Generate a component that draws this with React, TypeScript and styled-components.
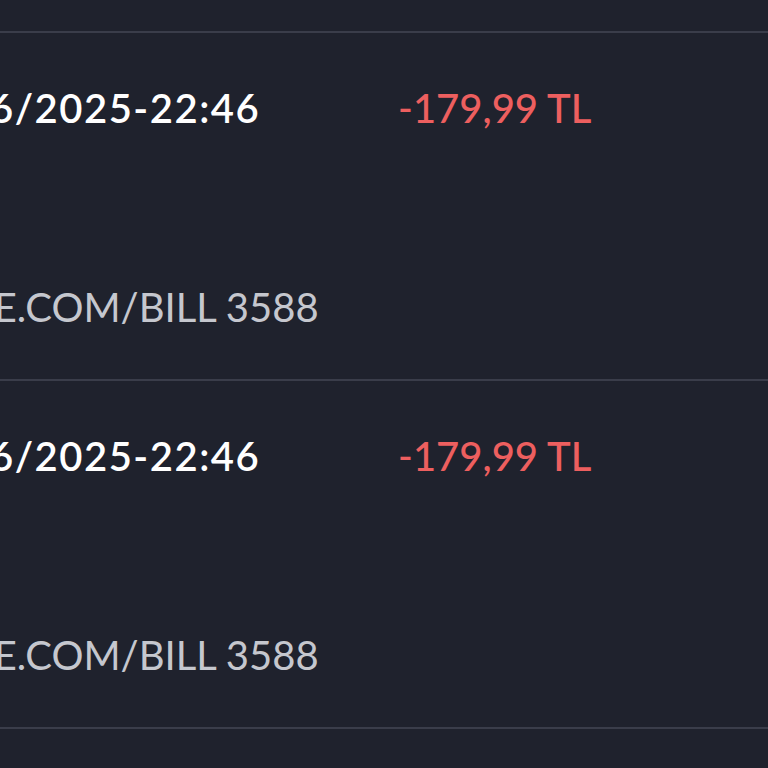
import React from "react";
import styled, { createGlobalStyle } from "styled-components";

interface Transaction {
  date: string;
  amount: string;
  description: string;
}

const transactions: Transaction[] = [
  { date: "16/06/2025-22:46", amount: "-179,99 TL", description: "APPLE.COM/BILL 3588" },
  { date: "16/06/2025-22:46", amount: "-179,99 TL", description: "APPLE.COM/BILL 3588" },
];

const App: React.FC = () => {
  return (
    <>
      <GlobalStyle />
      <Screen>
        <TopSpace />
        {transactions.map((t, index) => (
          <React.Fragment key={index}>
            <Divider />
            <Row>
              <Info>
                <DateText>{t.date}</DateText>
                <Description>{t.description}</Description>
              </Info>
              <Amount>{t.amount}</Amount>
            </Row>
          </React.Fragment>
        ))}
        <Divider />
      </Screen>
    </>
  );
};

export default App;

const GlobalStyle = createGlobalStyle`
  html, body {
    margin: 0;
    padding: 0;
    background: #1f222d;
    overflow: hidden;
  }

  body {
    font-family: Lato, "Noto Sans", sans-serif;
  }
`;

const Screen = styled.div`
  width: 768px;
  height: 768px;
  display: flex;
  flex-direction: column;
  background: #1f222d;
  overflow: hidden;
`;

const TopSpace = styled.div`
  height: 31px;
`;

const Divider = styled.div`
  height: 2px;
  background: #3a3d4a;
  flex-shrink: 0;
`;

const Row = styled.div`
  display: flex;
  align-items: flex-start;
  height: 346px;
  padding-top: 51px;
  box-sizing: border-box;
  flex-shrink: 0;
`;

const Info = styled.div`
  display: flex;
  flex-direction: column;
  gap: 151px;
  width: 500px;
  margin-left: -102px;
  flex-shrink: 0;
  white-space: nowrap;
`;

const DateText = styled.div`
  margin-left: -2px;
  font-size: 40px;
  line-height: 48px;
  font-weight: 600;
  letter-spacing: 1.5px;
  color: #ffffff;
`;

const Description = styled.div`
  font-size: 40px;
  line-height: 48px;
  font-weight: 400;
  color: #c5c7ce;
`;

const Amount = styled.div`
  font-size: 40px;
  line-height: 48px;
  font-weight: 500;
  color: #ed5f5f;
  white-space: nowrap;
`;
